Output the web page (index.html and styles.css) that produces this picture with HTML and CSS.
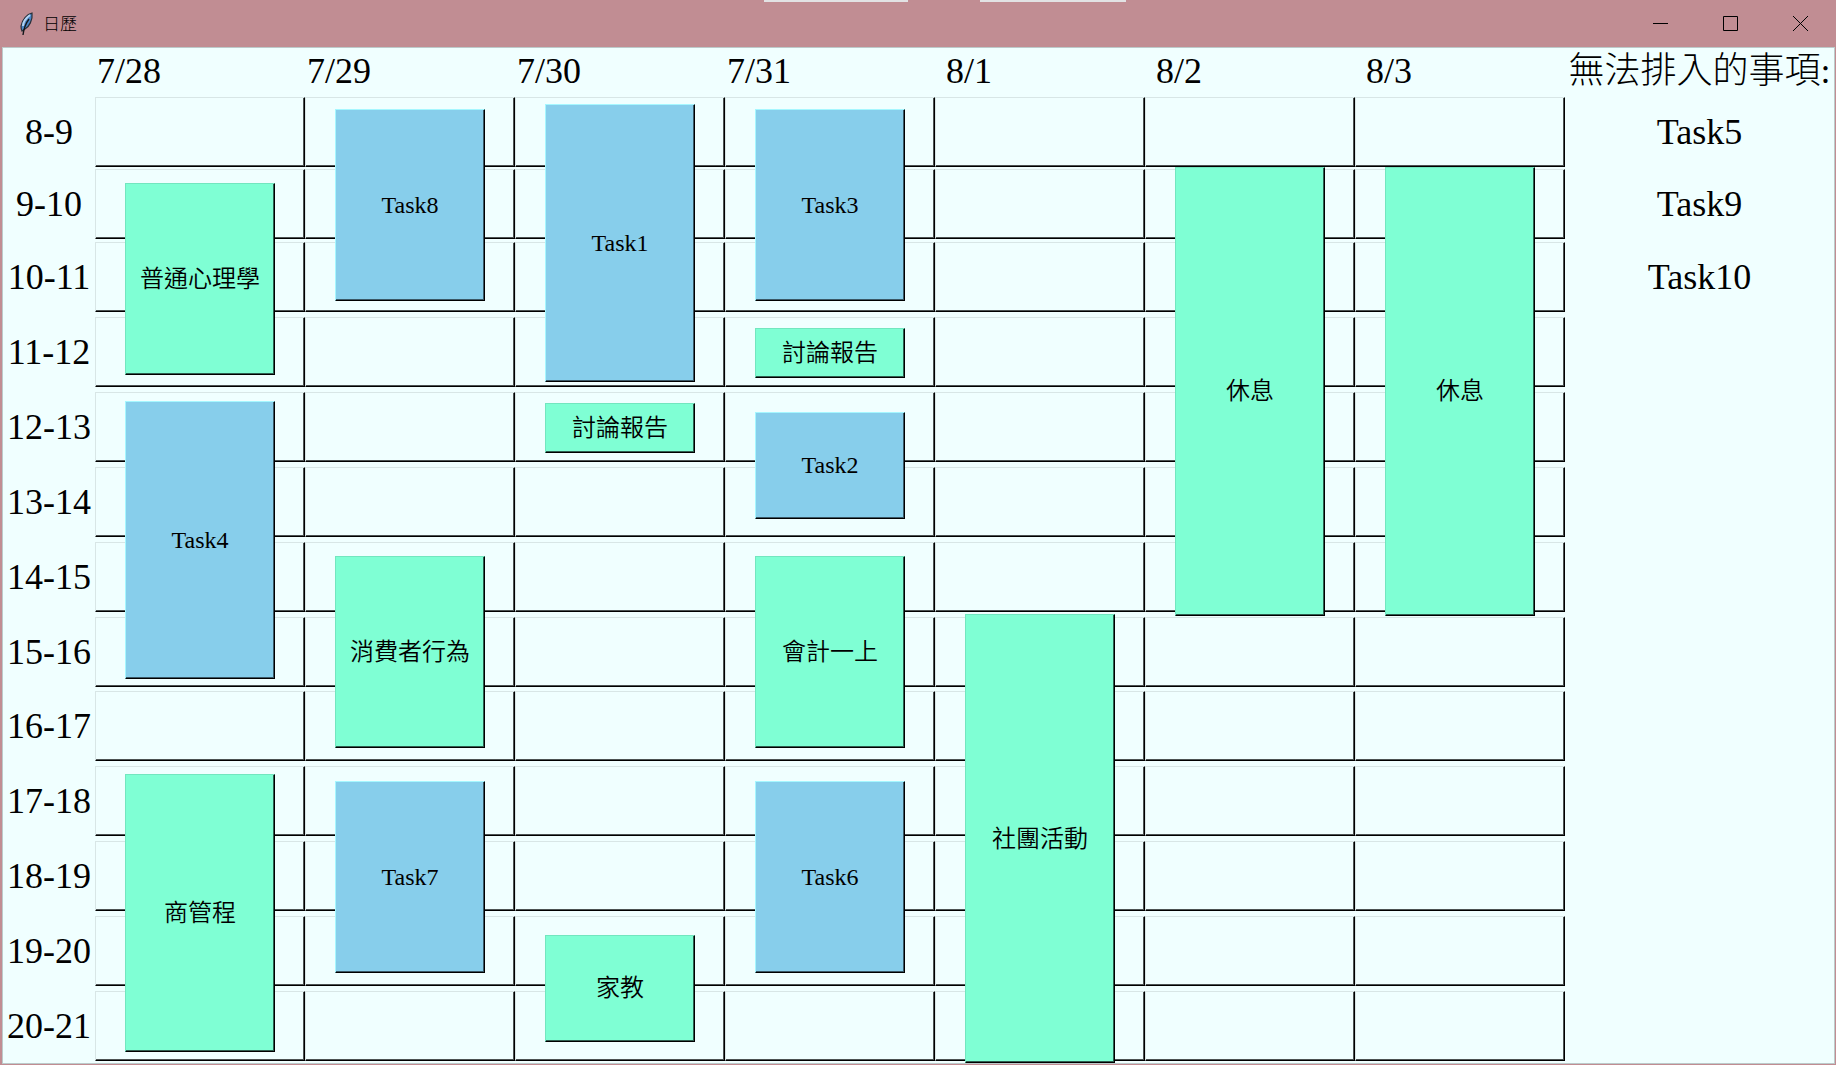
FILE: index.html
```html
<!DOCTYPE html>
<html lang="zh-Hant">
<head>
<meta charset="utf-8">
<title>日歷</title>
<link rel="stylesheet" href="styles.css">
</head>
<body>
<div class="window">
  <header class="titlebar">
    <svg class="feather" viewBox="0 0 16 24" aria-hidden="true">
      <path d="M14 1C9 2 4 8 3 14c0 2 0 3 1 5l3-2c4-2 8-9 7-16z" fill="#4a86c8" stroke="#2a3038" stroke-width="1.2"/>
      <path d="M12 3C8 6 5 10 5 14" fill="none" stroke="#b4d4f2" stroke-width="2"/>
      <path d="M11 7C8 11 6 15 5 23" fill="none" stroke="#15181c" stroke-width="1.4"/>
    </svg>
    <h1 class="title">日歷</h1>
    <div class="controls">
      <button class="control" aria-label="Minimize"><svg class="glyph" viewBox="0 0 15 15"><path d="M0 7.5h15"/></svg></button>
      <button class="control" aria-label="Maximize"><svg class="glyph" viewBox="0 0 15 15"><path d="M.5.5h14v14H.5z"/></svg></button>
      <button class="control" aria-label="Close"><svg class="glyph" viewBox="0 0 15 15"><path d="M0 0l15 15M15 0L0 15"/></svg></button>
    </div>
  </header>
  <main class="board">
    <table class="calendar tracks">
      <thead>
        <tr><td></td><th class="day">7/28</th><th class="day">7/29</th><th class="day">7/30</th><th class="day">7/31</th><th class="day">8/1</th><th class="day">8/2</th><th class="day">8/3</th><th class="side-title">無法排入的事項:</th></tr>
      </thead>
      <tbody>
        <tr><th class="hour">8-9</th><td class="slot"></td><td class="slot"></td><td class="slot"></td><td class="slot"></td><td class="slot"></td><td class="slot"></td><td class="slot"></td><td class="side">Task5</td></tr>
        <tr><th class="hour">9-10</th><td class="slot"></td><td class="slot"></td><td class="slot"></td><td class="slot"></td><td class="slot"></td><td class="slot"></td><td class="slot"></td><td class="side">Task9</td></tr>
        <tr><th class="hour">10-11</th><td class="slot"></td><td class="slot"></td><td class="slot"></td><td class="slot"></td><td class="slot"></td><td class="slot"></td><td class="slot"></td><td class="side">Task10</td></tr>
        <tr><th class="hour">11-12</th><td class="slot"></td><td class="slot"></td><td class="slot"></td><td class="slot"></td><td class="slot"></td><td class="slot"></td><td class="slot"></td><td></td></tr>
        <tr><th class="hour">12-13</th><td class="slot"></td><td class="slot"></td><td class="slot"></td><td class="slot"></td><td class="slot"></td><td class="slot"></td><td class="slot"></td><td></td></tr>
        <tr><th class="hour">13-14</th><td class="slot"></td><td class="slot"></td><td class="slot"></td><td class="slot"></td><td class="slot"></td><td class="slot"></td><td class="slot"></td><td></td></tr>
        <tr><th class="hour">14-15</th><td class="slot"></td><td class="slot"></td><td class="slot"></td><td class="slot"></td><td class="slot"></td><td class="slot"></td><td class="slot"></td><td></td></tr>
        <tr><th class="hour">15-16</th><td class="slot"></td><td class="slot"></td><td class="slot"></td><td class="slot"></td><td class="slot"></td><td class="slot"></td><td class="slot"></td><td></td></tr>
        <tr><th class="hour">16-17</th><td class="slot"></td><td class="slot"></td><td class="slot"></td><td class="slot"></td><td class="slot"></td><td class="slot"></td><td class="slot"></td><td></td></tr>
        <tr><th class="hour">17-18</th><td class="slot"></td><td class="slot"></td><td class="slot"></td><td class="slot"></td><td class="slot"></td><td class="slot"></td><td class="slot"></td><td></td></tr>
        <tr><th class="hour">18-19</th><td class="slot"></td><td class="slot"></td><td class="slot"></td><td class="slot"></td><td class="slot"></td><td class="slot"></td><td class="slot"></td><td></td></tr>
        <tr><th class="hour">19-20</th><td class="slot"></td><td class="slot"></td><td class="slot"></td><td class="slot"></td><td class="slot"></td><td class="slot"></td><td class="slot"></td><td></td></tr>
        <tr><th class="hour">20-21</th><td class="slot"></td><td class="slot"></td><td class="slot"></td><td class="slot"></td><td class="slot"></td><td class="slot"></td><td class="slot"></td><td></td></tr>
      </tbody>
    </table>
    <!-- grid-area: start row / day column / end row -->
    <div class="events tracks">
      <button class="event fixed h3" style="grid-area:3/2/6">普通心理學</button>
      <button class="event task h4" style="grid-area:6/2/10">Task4</button>
      <button class="event fixed h4" style="grid-area:11/2/15">商管程</button>
      <button class="event task h3" style="grid-area:2/3/5">Task8</button>
      <button class="event fixed h3" style="grid-area:8/3/11">消費者行為</button>
      <button class="event task h3" style="grid-area:11/3/14">Task7</button>
      <button class="event task h4" style="grid-area:2/4/6">Task1</button>
      <button class="event fixed h1" style="grid-area:6/4/7">討論報告</button>
      <button class="event fixed h2" style="grid-area:13/4/15">家教</button>
      <button class="event task h3" style="grid-area:2/5/5">Task3</button>
      <button class="event fixed h1" style="grid-area:5/5/6">討論報告</button>
      <button class="event task h2" style="grid-area:6/5/8">Task2</button>
      <button class="event fixed h3" style="grid-area:8/5/11">會計一上</button>
      <button class="event task h3" style="grid-area:11/5/14">Task6</button>
      <button class="event fixed h6" style="grid-area:9/6/15">社團活動</button>
      <button class="event fixed h6" style="grid-area:3/7/9">休息</button>
      <button class="event fixed h6" style="grid-area:3/8/9">休息</button>
    </div>
  </main>
</div>
</body>
</html>
```
FILE: styles.css
```css
* { box-sizing: border-box; }

body {
  margin: 0;
  background: #f0ffff;
  color: #000;
  font-family: "Liberation Serif", "Noto Sans CJK TC", serif;
  font-weight: 300;
}

.window {
  display: flex;
  flex-direction: column;
  min-height: 100vh;
  border: solid #c18d93;
  border-width: 0 1px 1px 2px;
}

.titlebar {
  position: relative;
  display: flex;
  align-items: center;
  height: 47px;
  padding-left: 16px;
  background: #c18d93;
}

/* light strips on the window's top edge */
.titlebar::before,
.titlebar::after {
  content: "";
  position: absolute;
  top: 0;
  left: calc(50% - 155px);
  width: 144px;
  height: 2px;
  background: #e2e2e4;
}

.titlebar::after {
  left: calc(50% + 61px);
  width: 146px;
}

.feather { width: 16px; height: 24px; }

.title {
  margin: 0 0 2px 9px;
  font: 300 17px/24px "Noto Sans CJK TC", sans-serif;
}

.controls { display: flex; margin-left: auto; }

.control {
  display: grid;
  place-items: center;
  width: 70px;
  height: 47px;
  padding: 0;
  border: 0;
  background: none;
}

.glyph {
  width: 15px;
  height: 15px;
  fill: none;
  stroke: #000;
}

.board {
  display: grid;
  flex: 1;
  border: 1px solid #bccaca;
}

.tracks {
  grid-area: 1 / 1;
  display: grid;
  grid-template-columns: 92px repeat(7, 1fr) 269px;
  grid-template-rows: 49px 72px 73px repeat(5, 75px) 74px repeat(4, 75px) 70px;
}

.events {
  grid-template-rows: 47px 72px 73px repeat(5, 75px) 74px repeat(4, 75px) 73px;
  pointer-events: none;
}

.calendar thead,
.calendar tbody,
.calendar tr { display: contents; }

.calendar th,
.calendar td {
  padding: 0;
  font-size: 36px;
  font-weight: 300;
  line-height: 46px;
  text-align: center;
}

.calendar .day { width: 68px; }

.calendar .side-title { white-space: nowrap; }

.calendar .hour,
.calendar .side {
  height: 70px;
  line-height: 70px;
}

.slot {
  height: 70px;
  border: 1px solid #d8e6e6;
  border-right-color: #000;
  border-bottom-color: #000;
  box-shadow: inset -1px -1px #4c5252;
}

.event {
  align-self: center;
  margin: 0 30px;
  padding: 0;
  border: 1px solid;
  border-right-color: #000;
  border-bottom-color: #000;
  color: #000;
  font: inherit;
  font-size: 24px;
  font-weight: 350;
  line-height: 32px;
  pointer-events: auto;
}

.fixed {
  background: #7fffd4;
  border-top-color: #72e6bf;
  border-left-color: #72e6bf;
  box-shadow: inset -1px -1px #2f5f50;
}

.task {
  background: #87ceeb;
  border-top-color: #a5f7ff;
  border-left-color: #a5f7ff;
  box-shadow: inset -1px -1px #3a5866;
}

.h1 { height: 50px; }
.h2 { height: 107px; }
.h3 { height: 192px; }
.h4 { height: 278px; }
.h6 { height: 449px; }
```
